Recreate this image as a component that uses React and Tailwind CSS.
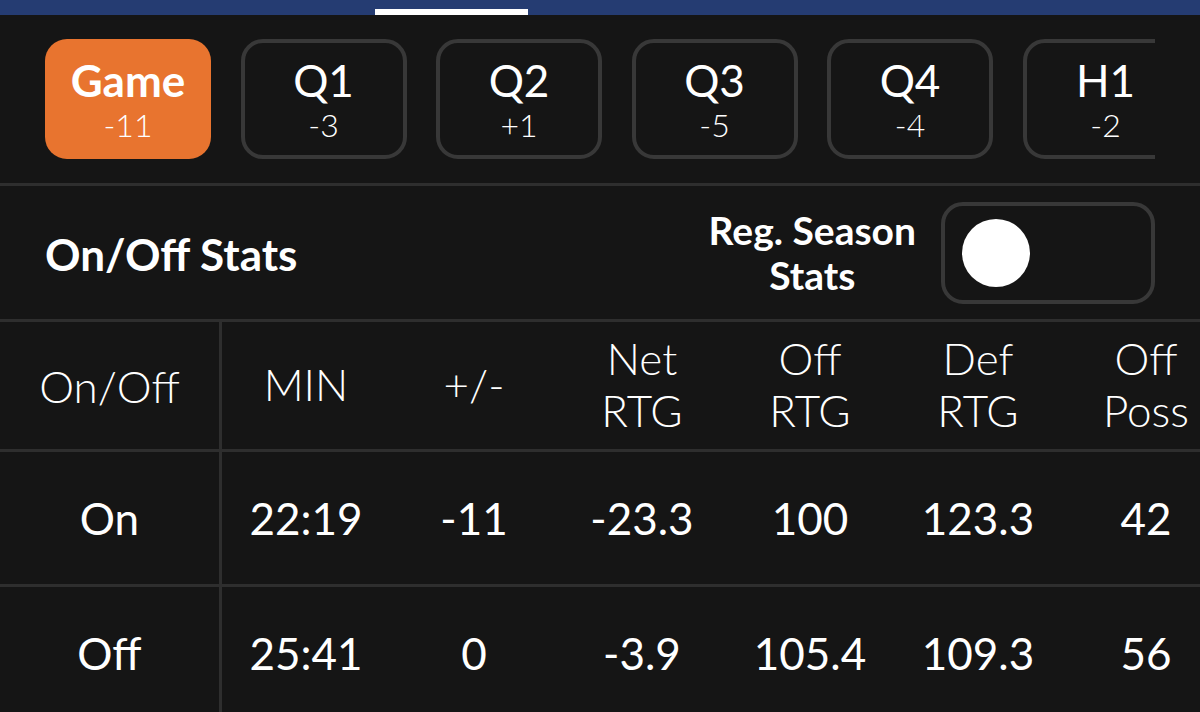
import { useState } from "react";

const periods = [
  { label: "Game", diff: "-11" },
  { label: "Q1", diff: "-3" },
  { label: "Q2", diff: "+1" },
  { label: "Q3", diff: "-5" },
  { label: "Q4", diff: "-4" },
  { label: "H1", diff: "-2" },
];

const columns = [
  ["MIN"],
  ["+/-"],
  ["Net", "RTG"],
  ["Off", "RTG"],
  ["Def", "RTG"],
  ["Off", "Poss"],
];

const rows = [
  { name: "On", values: ["22:19", "-11", "-23.3", "100", "123.3", "42"] },
  { name: "Off", values: ["25:41", "0", "-3.9", "105.4", "109.3", "56"] },
];

export default function App() {
  const [selected, setSelected] = useState("Game");
  const [regSeason, setRegSeason] = useState(false);

  return (
    <div className="w-[1200px] h-[712px] overflow-hidden bg-[#151515] text-white font-['Lato','Noto_Sans',sans-serif]">
      {/* Top tab bar */}
      <div className="h-[15px] bg-[#253c72] flex items-end pl-[375px]">
        <div className="w-[153px] h-[6px] bg-white" />
      </div>

      {/* Period selector */}
      <div className="pt-[24px] pb-[24px]">
        <div className="ml-[45px] w-[1110px] overflow-hidden flex gap-[29.5px]">
          {periods.map((p) => {
            const active = selected === p.label;
            return (
              <button
                key={p.label}
                onClick={() => setSelected(p.label)}
                className={`shrink-0 w-[166px] h-[120px] rounded-[22px] flex flex-col items-center justify-center pt-[2px] ${
                  active ? "bg-[#e8742f]" : "border-[4px] border-[#383838]"
                }`}
              >
                <span className={`text-[44px] leading-[46px] ${active ? "font-bold" : "font-normal"}`}>
                  {p.label}
                </span>
                <span className="text-[32px] leading-[36px] font-light mt-[4px]">{p.diff}</span>
              </button>
            );
          })}
        </div>
      </div>

      <div className="h-[3px] bg-[#2e2e2e]" />

      {/* Section header */}
      <div className="h-[133px] flex items-center pl-[45px] pr-[45px]">
        <h2 className="text-[44px] font-bold leading-none pt-[2px]">On/Off Stats</h2>
        <div className="ml-auto flex items-center gap-[25px]">
          <div className="text-[39px] font-bold leading-[45px] text-center">
            Reg. Season
            <br />
            Stats
          </div>
          <button
            onClick={() => setRegSeason(!regSeason)}
            className={`w-[214px] h-[102px] rounded-[22px] border-[4px] border-[#383838] flex items-center px-[17px] ${
              regSeason ? "justify-end" : "justify-start"
            }`}
          >
            <div className="w-[68px] h-[68px] rounded-full bg-white" />
          </button>
        </div>
      </div>

      <div className="h-[3px] bg-[#2e2e2e]" />

      {/* Table */}
      <div className="flex h-[127px]">
        <div className="w-[222px] shrink-0 border-r-[3px] border-[#2e2e2e] flex items-center justify-center text-[44px] font-light leading-[52px]">
          On/Off
        </div>
        {columns.map((c, i) => (
          <div
            key={i}
            className="w-[168px] shrink-0 flex flex-col items-center justify-center text-[44px] font-light leading-[52px] pb-[4px]"
          >
            {c.map((line) => (
              <span key={line}>{line}</span>
            ))}
          </div>
        ))}
      </div>

      {rows.map((r) => (
        <div key={r.name}>
          <div className="h-[3px] bg-[#2e2e2e]" />
          <div className="flex h-[132px]">
            <div className="w-[222px] shrink-0 border-r-[3px] border-[#2e2e2e] flex items-center justify-center text-[44px] leading-none">
              {r.name}
            </div>
            {r.values.map((v, i) => (
              <div
                key={i}
                className="w-[168px] shrink-0 flex items-center justify-center text-[44px] leading-none"
              >
                {v}
              </div>
            ))}
          </div>
        </div>
      ))}
    </div>
  );
}
